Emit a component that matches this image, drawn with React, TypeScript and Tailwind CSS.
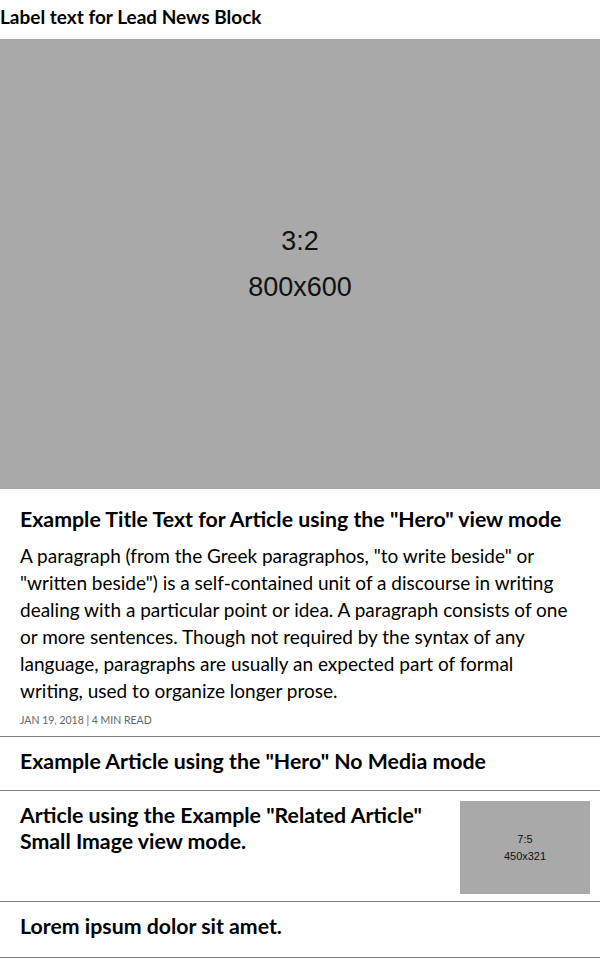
import React from "react";

const font = { fontFamily: "Lato, 'Noto Sans', sans-serif" };

function Placeholder({ ratio, size, className }: { ratio: string; size: string; className: string }) {
    return (
        <div className={`bg-[#a9a9a9] flex flex-col items-center justify-center text-[#111] font-['Liberation_Sans',Arial,sans-serif] ${className}`}>
            <span>{ratio}</span>
            <span>{size}</span>
        </div>
    );
}

export default function App() {
    return (
        <div className="w-[600px] bg-white text-black" style={font}>
            <h2 className="text-[19px] font-bold leading-[33px] h-[39px]">Label text for Lead News Block</h2>
            <Placeholder ratio="3:2" size="800x600" className="h-[450px] text-[27px] leading-[46px]" />

            <article className="px-5 pt-[17px] pb-2 border-b border-[#808080]">
                <h3 className="text-[21.3px] font-bold leading-[26px]">Example Title Text for Article using the "Hero" view mode</h3>
                <p className="mt-[10px] text-[19px] leading-[27px]">
                    A paragraph (from the Greek paragraphos, "to write beside" or "written beside") is a self-contained unit of a discourse in writing dealing with a particular point or idea. A paragraph consists of one or more sentences. Though not required by the syntax of any language, paragraphs are usually an expected part of formal writing, used to organize longer prose.
                </p>
                <div className="mt-2 text-[10.5px] leading-4 text-[#666] uppercase">Jan 19, 2018 | 4 min read</div>
            </article>

            <article className="px-5 pt-[11px] pb-4 border-b border-[#808080]">
                <h3 className="text-[21.3px] font-bold leading-[26px]">Example Article using the "Hero" No Media mode</h3>
            </article>

            <article className="flex justify-between pl-5 pr-[10px] pt-[10px] pb-[7px] border-b border-[#808080]">
                <h3 className="mt-px w-[430px] text-[21.3px] font-bold leading-[26px]">
                    Article using the Example "Related Article" Small Image view mode.
                </h3>
                <Placeholder ratio="7:5" size="450x321" className="w-[130px] h-[93px] text-[11px] leading-[17px]" />
            </article>

            <article className="px-5 pt-[11px] pb-[18px] border-b border-[#808080]">
                <h3 className="text-[21.3px] font-bold leading-[26px]">Lorem ipsum dolor sit amet.</h3>
            </article>
        </div>
    );
}
